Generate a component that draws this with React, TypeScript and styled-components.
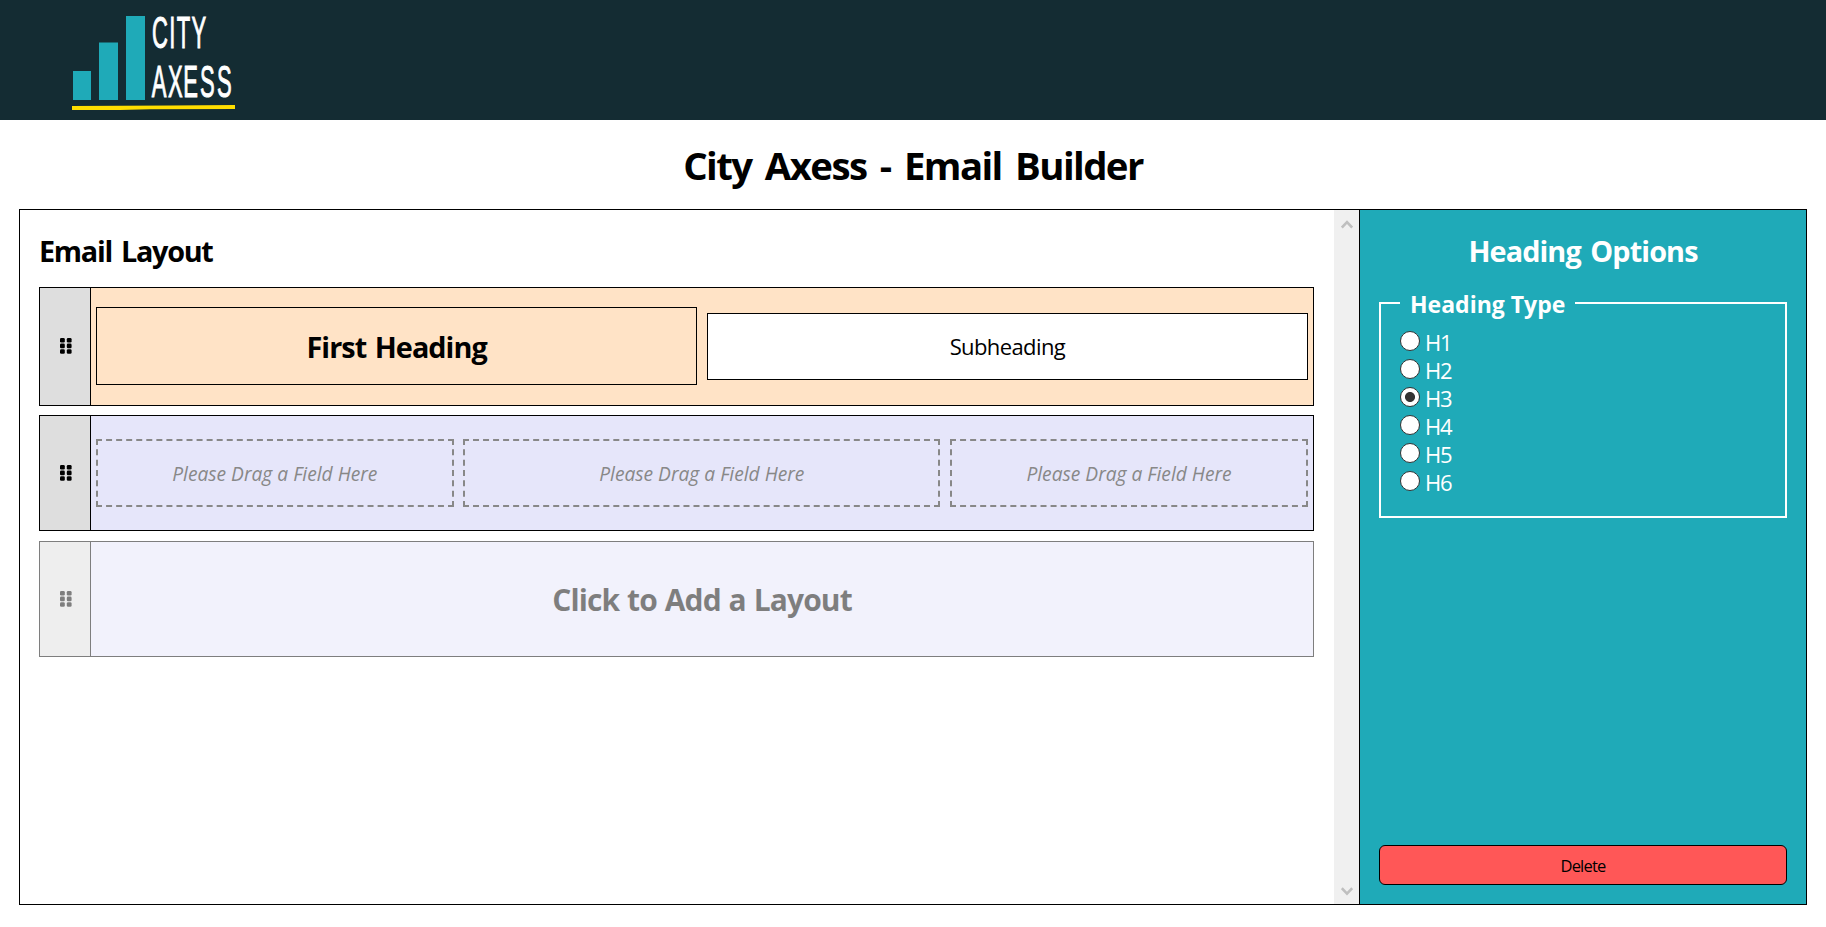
import React, { useState } from "react";
import styled, { createGlobalStyle } from "styled-components";

const GlobalStyle = createGlobalStyle`
  *, *::before, *::after { box-sizing: border-box; }
  html, body, #root { height: 100%; }
  body {
    margin: 0;
    overflow: hidden;
    background: #fff;
    color: #000;
    font-family: "Segoe UI", "Open Sans", "Noto Sans", sans-serif;
    font-size: 19.2px;
  }
  h1, h2, h3, p { margin: 0; }
`;

const Page = styled.div`
  display: flex;
  flex-direction: column;
  height: 100%;
`;

const Header = styled.header`
  flex: none;
  height: 120px;
  padding-left: 72px;
  background: #142c33;
`;

const LogoDrawing = styled.svg`
  display: block;
  overflow: visible;
`;

const Title = styled.h1`
  flex: none;
  height: 89px;
  padding-top: 19px;
  text-align: center;
  font-size: 38.4px;
  line-height: 53px;
  letter-spacing: -1.6px;
  word-spacing: 5px;
`;

const Builder = styled.main`
  display: flex;
  height: 696px;
  margin: 0 19px;
  border: 1px solid #000;
`;

const Canvas = styled.section`
  display: flex;
  flex: 1;
`;

const Rows = styled.div`
  display: flex;
  flex: 1;
  flex-direction: column;
  padding: 19px 20px 0 19px;
`;

const PanelTitle = styled.h2`
  height: 58px;
  font-size: 28.8px;
  line-height: 43px;
  letter-spacing: -1.3px;
  word-spacing: 3px;
`;

const ScrollTrack = styled.div`
  display: flex;
  flex-direction: column;
  align-items: center;
  justify-content: space-between;
  width: 25px;
  padding: 10px 0 8px;
  background: #f0f0f0;
`;

const Row = styled.div<{ $height: number; $faded?: boolean }>`
  display: flex;
  height: ${(p) => p.$height}px;
  margin-bottom: ${(p) => (p.$height > 117 ? 9 : 10)}px;
  border: 1px solid #000;
  opacity: ${(p) => (p.$faded ? 0.5 : 1)};
`;

const Handle = styled.div`
  display: flex;
  align-items: center;
  justify-content: center;
  width: 51px;
  padding: 0 0 1px 2px;
  border-right: 1px solid #000;
  background: #dedede;
`;

const RowBody = styled.div<{ $columns: string; $selected?: boolean }>`
  display: grid;
  flex: 1;
  grid-template-columns: ${(p) => p.$columns};
  align-items: center;
  column-gap: 9.6px;
  padding: 0 5px;
  background: ${(p) => (p.$selected ? "#ffe3c6" : "#e6e6fa")};
`;

const Field = styled.div<{ $selected?: boolean }>`
  display: flex;
  align-items: center;
  justify-content: center;
  height: ${(p) => (p.$selected ? 78 : 67)}px;
  margin-bottom: ${(p) => (p.$selected ? 1 : 0)}px;
  border: 1px solid #000;
  background: ${(p) => (p.$selected ? "transparent" : "#fff")};
`;

const FieldHeading = styled.h3`
  padding-top: 1px;
  font-size: 28.8px;
  line-height: 40px;
  letter-spacing: -0.95px;
  word-spacing: 2px;
`;

const FieldText = styled.p`
  padding-bottom: 1px;
  font-size: 22px;
  letter-spacing: -0.6px;
`;

const DropZone = styled.div`
  display: flex;
  align-items: center;
  justify-content: center;
  height: 68px;
  border: 2px dashed #888;
  color: #888;
  font-size: 19.2px;
  font-style: italic;
`;

const AddLabel = styled.h2`
  padding-top: 1px;
  text-align: center;
  font-size: 30px;
  letter-spacing: -0.9px;
  word-spacing: 1px;
`;

const Options = styled.aside`
  display: flex;
  flex-direction: column;
  width: 447px;
  padding: 19px;
  border-left: 1px solid #000;
  background: #1faab8;
  color: #fff;
`;

const OptionsTitle = styled(PanelTitle)`
  text-align: center;
  letter-spacing: -0.9px;
`;

const TypeGroup = styled.fieldset`
  height: 231px;
  margin: 0;
  padding: 0 19px;
  border: 2px solid #fff;
`;

const Legend = styled.legend`
  padding: 2px 10px 0;
  font-size: 23px;
  font-weight: 700;
  line-height: 30px;
`;

const Choices = styled.div`
  padding-top: 9px;
`;

const Choice = styled.label`
  display: flex;
  align-items: center;
  gap: 5px;
  height: 28px;
  font-size: 22px;
  letter-spacing: -1.2px;
`;

const Radio = styled.input`
  flex: none;
  appearance: none;
  width: 20px;
  height: 20px;
  margin: 0 0 2px;
  border: 1px solid #333;
  border-radius: 50%;
  background: #fff;
  &:checked { background: radial-gradient(circle, #333 4.6px, #fff 5.4px); }
`;

const DeleteButton = styled.button`
  height: 40px;
  margin-top: auto;
  padding-top: 2px;
  border: 1px solid #000;
  border-radius: 6px;
  background: #ff5757;
  color: #000;
  font-family: inherit;
  font-size: 16.5px;
  letter-spacing: -0.8px;
`;

const Logo = () => (
  <LogoDrawing width="170" height="120" viewBox="72 0 170 120" role="img" aria-label="City Axess">
    <g fill="#1faab8">
      <rect x="73" y="71" width="18" height="29" />
      <rect x="99" y="42.5" width="19" height="57.5" />
      <rect x="126" y="16" width="19" height="84" />
    </g>
    <path d="M72 106L170 105.4L235 105V109L150 109.2L120 110H72Z" fill="#ffde00" />
    <g transform="scale(.5 1)" fill="#fff" stroke="#fff" strokeWidth="1" fontFamily="'Liberation Sans', sans-serif" fontSize="44">
      <text y="47.6" x="304 338.5 353.5 383">CITY</text>
      <text y="96.8" x="303.5 336 366.5 400 434">AXESS</text>
    </g>
  </LogoDrawing>
);

const Grip = () => (
  <svg width="12" height="16" viewBox="0 0 12 16">
    {[0, 5.6, 11.2].map((y) => [0, 6.8].map((x) => (
      <rect key={`${x}-${y}`} x={x} y={y} width="4.8" height="4.6" rx="1.3" />
    )))}
  </svg>
);

const Chevron = ({ down }: { down?: boolean }) => (
  <svg width="12" height="9" viewBox="0 0 12 9">
    <path d={down ? "M.8 1.2L6 6.6L11.2 1.2" : "M.8 7.6L6 2.2L11.2 7.6"} fill="none" stroke="#bfbfbf" strokeWidth="2.6" />
  </svg>
);

export default function App() {
  const [level, setLevel] = useState("H3");
  return (
    <Page>
      <GlobalStyle />
      <Header><Logo /></Header>
      <Title>City Axess - Email Builder</Title>
      <Builder>
        <Canvas>
          <Rows>
            <PanelTitle>Email Layout</PanelTitle>
            <Row $height={119}>
              <Handle><Grip /></Handle>
              <RowBody $columns="1fr 1fr" $selected>
                <Field $selected><FieldHeading>First Heading</FieldHeading></Field>
                <Field><FieldText>Subheading</FieldText></Field>
              </RowBody>
            </Row>
            <Row $height={116}>
              <Handle><Grip /></Handle>
              <RowBody $columns="357.6px 1fr 358px">
                <DropZone>Please Drag a Field Here</DropZone>
                <DropZone>Please Drag a Field Here</DropZone>
                <DropZone>Please Drag a Field Here</DropZone>
              </RowBody>
            </Row>
            <Row $height={116} $faded>
              <Handle><Grip /></Handle>
              <RowBody $columns="1fr"><AddLabel>Click to Add a Layout</AddLabel></RowBody>
            </Row>
          </Rows>
          <ScrollTrack><Chevron /><Chevron down /></ScrollTrack>
        </Canvas>
        <Options>
          <OptionsTitle>Heading Options</OptionsTitle>
          <TypeGroup>
            <Legend>Heading Type</Legend>
            <Choices>
              {["H1", "H2", "H3", "H4", "H5", "H6"].map((h) => (
                <Choice key={h}>
                  <Radio type="radio" name="heading" checked={level === h} onChange={() => setLevel(h)} />
                  {h}
                </Choice>
              ))}
            </Choices>
          </TypeGroup>
          <DeleteButton>Delete</DeleteButton>
        </Options>
      </Builder>
    </Page>
  );
}
